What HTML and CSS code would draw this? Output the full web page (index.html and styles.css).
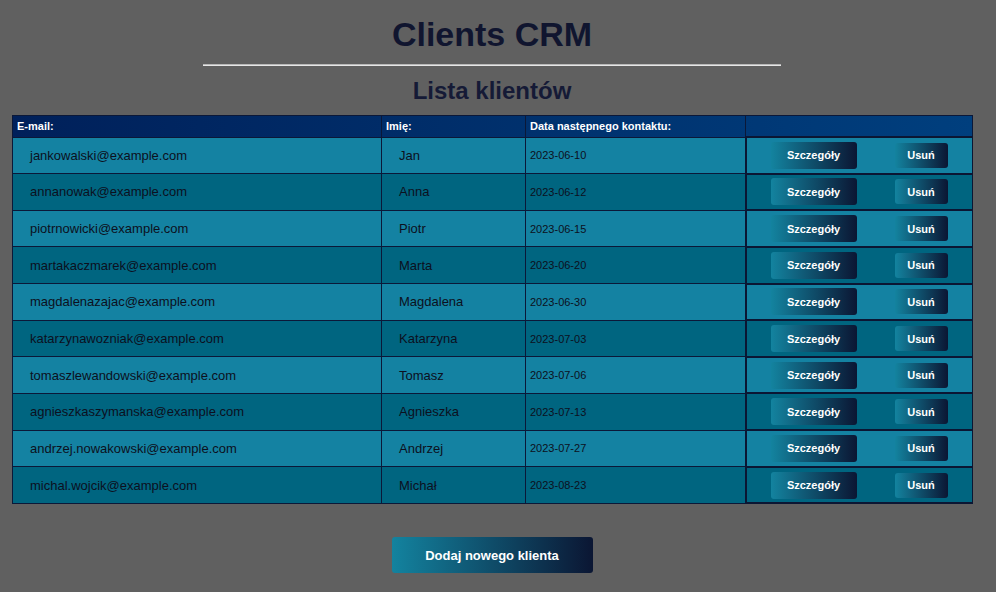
FILE: index.html
```html
<!DOCTYPE html>
<html lang="pl">
<head>
<meta charset="utf-8">
<title>Clients CRM</title>
<link rel="stylesheet" href="styles.css">
</head>
<body>
<div class="page">
  <h1 class="title">Clients CRM</h1>
  <hr class="divider">
  <h2 class="subtitle">Lista klientów</h2>
  <table class="clients">
    <colgroup>
      <col class="c-email"><col class="c-name"><col class="c-date"><col class="c-actions">
    </colgroup>
    <thead>
      <tr><th>E-mail:</th><th>Imię:</th><th>Data następnego kontaktu:</th><th></th></tr>
    </thead>
    <tbody>
      <tr><td class="email">jankowalski@example.com</td><td class="name">Jan</td><td class="date">2023-06-10</td><td class="actions"><div class="btns"><button class="btn btn-details">Szczegóły</button><button class="btn btn-del">Usuń</button></div></td></tr>
      <tr><td class="email">annanowak@example.com</td><td class="name">Anna</td><td class="date">2023-06-12</td><td class="actions"><div class="btns"><button class="btn btn-details">Szczegóły</button><button class="btn btn-del">Usuń</button></div></td></tr>
      <tr><td class="email">piotrnowicki@example.com</td><td class="name">Piotr</td><td class="date">2023-06-15</td><td class="actions"><div class="btns"><button class="btn btn-details">Szczegóły</button><button class="btn btn-del">Usuń</button></div></td></tr>
      <tr><td class="email">martakaczmarek@example.com</td><td class="name">Marta</td><td class="date">2023-06-20</td><td class="actions"><div class="btns"><button class="btn btn-details">Szczegóły</button><button class="btn btn-del">Usuń</button></div></td></tr>
      <tr><td class="email">magdalenazajac@example.com</td><td class="name">Magdalena</td><td class="date">2023-06-30</td><td class="actions"><div class="btns"><button class="btn btn-details">Szczegóły</button><button class="btn btn-del">Usuń</button></div></td></tr>
      <tr><td class="email">katarzynawozniak@example.com</td><td class="name">Katarzyna</td><td class="date">2023-07-03</td><td class="actions"><div class="btns"><button class="btn btn-details">Szczegóły</button><button class="btn btn-del">Usuń</button></div></td></tr>
      <tr><td class="email">tomaszlewandowski@example.com</td><td class="name">Tomasz</td><td class="date">2023-07-06</td><td class="actions"><div class="btns"><button class="btn btn-details">Szczegóły</button><button class="btn btn-del">Usuń</button></div></td></tr>
      <tr><td class="email">agnieszkaszymanska@example.com</td><td class="name">Agnieszka</td><td class="date">2023-07-13</td><td class="actions"><div class="btns"><button class="btn btn-details">Szczegóły</button><button class="btn btn-del">Usuń</button></div></td></tr>
      <tr><td class="email">andrzej.nowakowski@example.com</td><td class="name">Andrzej</td><td class="date">2023-07-27</td><td class="actions"><div class="btns"><button class="btn btn-details">Szczegóły</button><button class="btn btn-del">Usuń</button></div></td></tr>
      <tr><td class="email">michal.wojcik@example.com</td><td class="name">Michał</td><td class="date">2023-08-23</td><td class="actions"><div class="btns"><button class="btn btn-details">Szczegóły</button><button class="btn btn-del">Usuń</button></div></td></tr>
    </tbody>
  </table>
  <div class="add-wrap">
    <button class="btn btn-add">Dodaj nowego klienta</button>
  </div>
</div>
</body>
</html>
```

FILE: styles.css
```css
html, body {
  margin: 0;
  padding: 0;
  background: #606060;
  font-family: "Liberation Sans", Arial, sans-serif;
}

.page {
  width: 960px;
  margin-left: 12px;
  padding-top: 14px;
}

.title {
  margin: 0;
  font-size: 34px;
  line-height: 40px;
  font-weight: bold;
  text-align: center;
  color: #10152f;
}

.divider {
  width: 578px;
  height: 0;
  margin: 10px auto 0;
  border: 0;
  border-top: 1px solid #b8b8b8;
  border-bottom: 1px solid #e6e6e6;
}

.subtitle {
  margin: 11px 0 0;
  font-size: 24px;
  line-height: 28px;
  font-weight: bold;
  text-align: center;
  color: #151a36;
}

.clients {
  margin-top: 10px;
  width: 960px;
  border-collapse: collapse;
  table-layout: fixed;
}

.c-email { width: 369px; }
.c-name { width: 144px; }
.c-date { width: 220px; }
.c-actions { width: 227px; }

.clients th,
.clients td {
  border: 1px solid #0b1838;
  padding: 0;
}

.clients thead tr {
  background: linear-gradient(to right, #00205a, #003f7e);
}

.clients th {
  height: 20px;
  padding: 0 4px;
  text-align: left;
  font-size: 11px;
  font-weight: bold;
  color: #ffffff;
  vertical-align: middle;
}

.clients tbody tr {
  height: 36.65px;
}

.clients tbody tr:nth-child(odd) { background: #1482a2; }
.clients tbody tr:nth-child(even) { background: #006580; }

.clients td {
  vertical-align: middle;
  color: #0c1020;
}

.email,
.name {
  padding-left: 17px !important;
  font-size: 13px;
}

.date {
  padding-left: 4px !important;
  font-size: 11px;
}

.clients td.actions {
  border-width: 2px 1px 2px 2px;
  border-color: #0b1633;
}

.btns {
  display: flex;
  align-items: center;
  gap: 38px;
  padding: 0 24px;
}

.btn {
  border: 0;
  border-radius: 3px;
  background: linear-gradient(to right, #13839f, #0b1633);
  color: #ffffff;
  font-family: "Liberation Sans", Arial, sans-serif;
  font-weight: bold;
  cursor: pointer;
  padding: 0;
}

.btn-details {
  width: 86px;
  height: 27px;
  font-size: 11px;
}

.btn-del {
  width: 53px;
  height: 25px;
  font-size: 11px;
}

.add-wrap {
  display: flex;
  justify-content: center;
  margin-top: 33px;
}

.btn-add {
  width: 201px;
  height: 36px;
  font-size: 13px;
}
```
